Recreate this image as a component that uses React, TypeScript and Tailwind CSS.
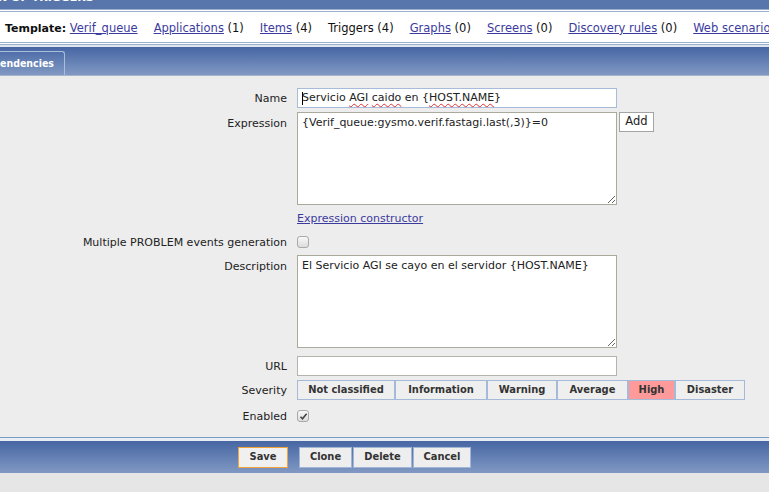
const navItems = [
  { label: 'Applications', count: 1, link: true },
  { label: 'Items', count: 4, link: true },
  { label: 'Triggers', count: 4, link: false },
  { label: 'Graphs', count: 0, link: true },
  { label: 'Screens', count: 0, link: true },
  { label: 'Discovery rules', count: 0, link: true },
  { label: 'Web scenarios', count: 0, link: true },
];

const severities = [
  { label: 'Not classified', w: 'w-[98px]' },
  { label: 'Information', w: 'w-[92px]' },
  { label: 'Warning', w: 'w-[70px]' },
  { label: 'Average', w: 'w-[71px]' },
  { label: 'High', w: 'w-[47px]', active: true },
  { label: 'Disaster', w: 'w-[70px]' },
];

const squiggle = 'underline decoration-wavy decoration-[#e03030] decoration-1 underline-offset-2';

function Checkbox({ checked }: { checked?: boolean }) {
  return (
    <div className="w-[12px] h-[12px] rounded-[3px] border border-[#a9a9a9] bg-linear-to-b from-[#f8f8f8] to-[#dcdcdc] flex items-center justify-center">
      {checked && (
        <svg width="9" height="9" viewBox="0 0 9 9">
          <path d="M1.5 4.8 L3.5 6.8 L7.6 1.8" fill="none" stroke="#444" strokeWidth="1.6" />
        </svg>
      )}
    </div>
  );
}

function Row({ label, top, className, children }: { label: string; top: string; className?: string; children: React.ReactNode }) {
  return (
    <div className={`flex ${top} ${className ?? 'items-center'}`}>
      <div className="w-[287px] shrink-0 text-right leading-[14px] pt-[2px]">{label}</div>
      <div className="ml-[10px] flex">{children}</div>
    </div>
  );
}

export default function App() {
  return (
    <div className="w-[769px] h-[492px] overflow-hidden bg-[#e6e6e6] font-['DejaVu_Sans',sans-serif] text-[11px] text-[#222]">
      {/* page title, scrolled out of view */}
      <div className="h-[9px] overflow-hidden bg-[#5876ac]">
        <div className="-mt-[8px] -ml-[2px] whitespace-nowrap text-[11px] font-bold leading-[11px] text-white">N OF TRIGGERS</div>
      </div>

      {/* template navigation */}
      <div className="h-[36px] border-y-[3px] border-double border-[#9aaecd] bg-white flex items-center pt-[3px] pl-[5px] gap-[16px] whitespace-nowrap text-[11.5px] text-[#111]">
        <div>
          <span className="font-bold text-[11px]">Template:</span>{' '}
          <a className="underline text-[#3b3b9e]">Verif_queue</a>
        </div>
        {navItems.map((item) => (
          <div key={item.label}>
            {item.link ? <a className="underline text-[#3b3b9e]">{item.label}</a> : item.label} ({item.count})
          </div>
        ))}
      </div>

      <div className="h-[2px] bg-[#dfe5ee]" />

      {/* tabs */}
      <div className="h-[29px] border-b border-[#a8b5c8] bg-linear-to-b from-[#4766a3] to-[#8199c3] flex items-end">
        <div className="h-[24px] w-[65px] overflow-hidden border-t border-r border-[#a9bddd] rounded-tr-[3px] flex items-center">
          <span className="-ml-[21px] whitespace-nowrap font-['DejaVu_Sans_Condensed','DejaVu_Sans',sans-serif] font-bold text-[10.5px] text-white">Dependencies</span>
        </div>
      </div>

      {/* form */}
      <div className="h-[361px] bg-[#ededed] pt-[12px] flex flex-col">
        <Row label="Name" top="">
          <div className="h-[20px] w-[320px] border border-[#a7bbdb] bg-white pl-[4px] flex items-center">
            <span className="inline-block w-px h-[13px] bg-black -mr-px" />
            <span className="whitespace-pre">
              Servicio <span className={squiggle}>AGI</span> <span className={squiggle}>caido</span> en {'{'}
              <span className={squiggle}>HOST.NAME</span>
              {'}'}
            </span>
          </div>
        </Row>

        <Row label="Expression" top="mt-[4px]" className="items-start [&>div:first-child]:pt-[5px]">
          <textarea
            readOnly
            spellCheck={false}
            defaultValue="{Verif_queue:gysmo.verif.fastagi.last(,3)}=0"
            className="h-[93px] w-[320px] border border-[#aba99c] bg-white px-[4px] py-[3px] text-[11px] leading-[14px] outline-none"
          />
          <div className="ml-[2px] h-[20px] w-[35px] border border-[#a4a4a4] bg-white flex items-center justify-center text-[11.5px]">
            Add
          </div>
        </Row>

        <Row label="" top="mt-[6px]">
          <a className="underline text-[#3b3b9e] leading-[14px] pt-[1px]">Expression constructor</a>
        </Row>

        <Row label="Multiple PROBLEM events generation" top="mt-[6px] h-[20px]">
          <Checkbox />
        </Row>

        <Row label="Description" top="mt-[3px]" className="items-start [&>div:first-child]:pt-[5px]">
          <textarea
            readOnly
            spellCheck={false}
            defaultValue="El Servicio AGI se cayo en el servidor {HOST.NAME}"
            className="h-[93px] w-[320px] border border-[#aba99c] bg-white px-[4px] py-[3px] text-[11px] leading-[14px] outline-none"
          />
        </Row>

        <Row label="URL" top="mt-[8px]">
          <div className="h-[20px] w-[320px] border border-[#b1b5ad] bg-white" />
        </Row>

        <Row label="Severity" top="mt-[4px]">
          {severities.map((s) => (
            <div
              key={s.label}
              className={`${s.w} h-[20px] border border-[#a5b9d8] flex items-center justify-center font-['DejaVu_Sans_Condensed','DejaVu_Sans',sans-serif] font-bold text-[11px] text-[#333] ${
                s.active ? 'bg-[#ff9a9a]' : 'bg-[#efefef]'
              }`}
            >
              {s.label}
            </div>
          ))}
        </Row>

        <Row label="Enabled" top="mt-[6px] h-[20px]">
          <Checkbox checked />
        </Row>
      </div>

      {/* footer buttons */}
      <div className="border-t border-[#7b9bc2] pt-[3px] bg-[#e9eef4]">
        <div className="h-[32px] bg-linear-to-b from-[#4766a3] to-[#8199c3] pt-[6px] pl-[238px] flex items-start font-['DejaVu_Sans_Condensed','DejaVu_Sans',sans-serif] font-bold text-[11px] text-[#333]">
          <div className="h-[21px] w-[50px] border border-[#f2a33a] bg-[#f0f0f0] flex items-center justify-center">Save</div>
          <div className="ml-[11px] h-[21px] w-[53px] border border-[#a1b5d4] bg-[#eeeeee] flex items-center justify-center">Clone</div>
          <div className="ml-px h-[21px] w-[59px] border border-[#a1b5d4] bg-[#eeeeee] flex items-center justify-center">Delete</div>
          <div className="ml-px h-[21px] w-[58px] border border-[#a1b5d4] bg-[#eeeeee] flex items-center justify-center">Cancel</div>
        </div>
      </div>
    </div>
  );
}
